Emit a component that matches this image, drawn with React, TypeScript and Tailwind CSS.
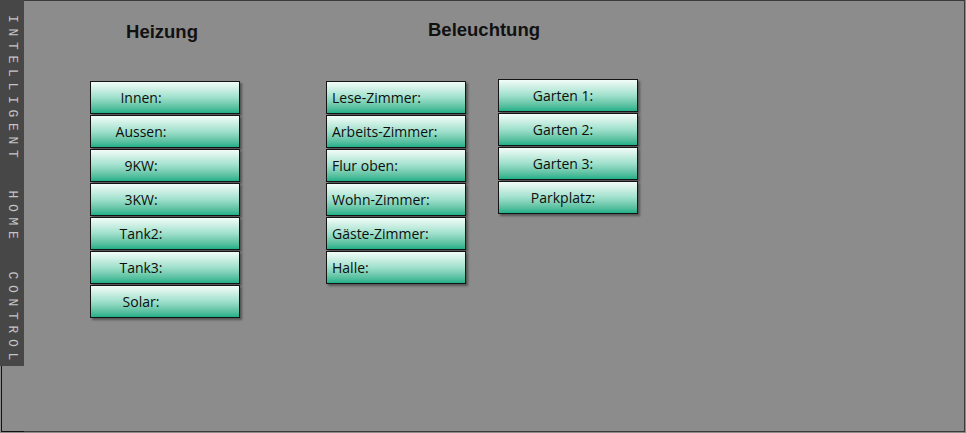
import React from 'react';

const heizung = ['Innen:', 'Aussen:', '9KW:', '3KW:', 'Tank2:', 'Tank3:', 'Solar:'];
const zimmer = ['Lese-Zimmer:', 'Arbeits-Zimmer:', 'Flur oben:', 'Wohn-Zimmer:', 'Gäste-Zimmer:', 'Halle:'];
const aussen = ['Garten 1:', 'Garten 2:', 'Garten 3:', 'Parkplatz:'];

const tile =
  'h-[33px] border border-[#141414] bg-linear-to-b from-[#f2fcf9] via-[#9fe0cc] to-[#1cb089] shadow-[2px_2px_2px_rgba(40,40,40,0.55)] flex items-center text-[14px] text-[#0e0e0e] font-["Open_Sans",sans-serif]';

const App: React.FC = () => {
  return (
    <div className="w-[966px] h-[433px] bg-[#8c8c8c] flex overflow-hidden">
      {/* Sidebar */}
      <div className="w-[24px] flex flex-col shrink-0">
        <div className="h-[366px] bg-[#474747] flex justify-center pt-[15px]">
          <span className="[writing-mode:vertical-rl] whitespace-pre font-['Liberation_Mono',monospace] text-[13px] tracking-[5.7px] text-[#c4c4c4] leading-none">
            {'INTELLIGENT  HOME  CONTROL'}
          </span>
        </div>
        <div className="flex-1 ml-px border-l border-b border-[#111] mb-px" />
      </div>

      {/* Main panel */}
      <div className="flex-1 border-t border-r border-b border-[#3a3a3a] mr-px mb-px flex">
        {/* Heizung */}
        <div className="ml-[66px] w-[150px] flex flex-col">
          <div className="h-[80px] pt-[17px] pr-[6px] text-center font-['Liberation_Sans',Arial,sans-serif] font-bold text-[18.5px] text-[#111]">
            Heizung
          </div>
          <div className="flex flex-col gap-[1px]">
            {heizung.map((h) => (
              <div key={h} className={tile}>
                <span className="w-[100px] text-center">{h}</span>
              </div>
            ))}
          </div>
        </div>

        {/* Beleuchtung */}
        <div className="ml-[86px] w-[312px] flex flex-col">
          <div className="h-[79px] pt-[15px] pl-[4px] text-center font-['Liberation_Sans',Arial,sans-serif] font-bold text-[18.5px] text-[#111]">
            Beleuchtung
          </div>
          <div className="flex gap-[32px] items-start">
            <div className="w-[140px] flex flex-col gap-[1px] mt-[1px]">
              {zimmer.map((z) => (
                <div key={z} className={tile + ' pl-[5px]'}>
                  {z}
                </div>
              ))}
            </div>
            <div className="w-[140px] flex flex-col gap-[1px] -mt-[1px]">
              {aussen.map((a) => (
                <div key={a} className={tile + ' justify-center pr-[10px]'}>
                  {a}
                </div>
              ))}
            </div>
          </div>
        </div>
      </div>
    </div>
  );
};

export default App;
